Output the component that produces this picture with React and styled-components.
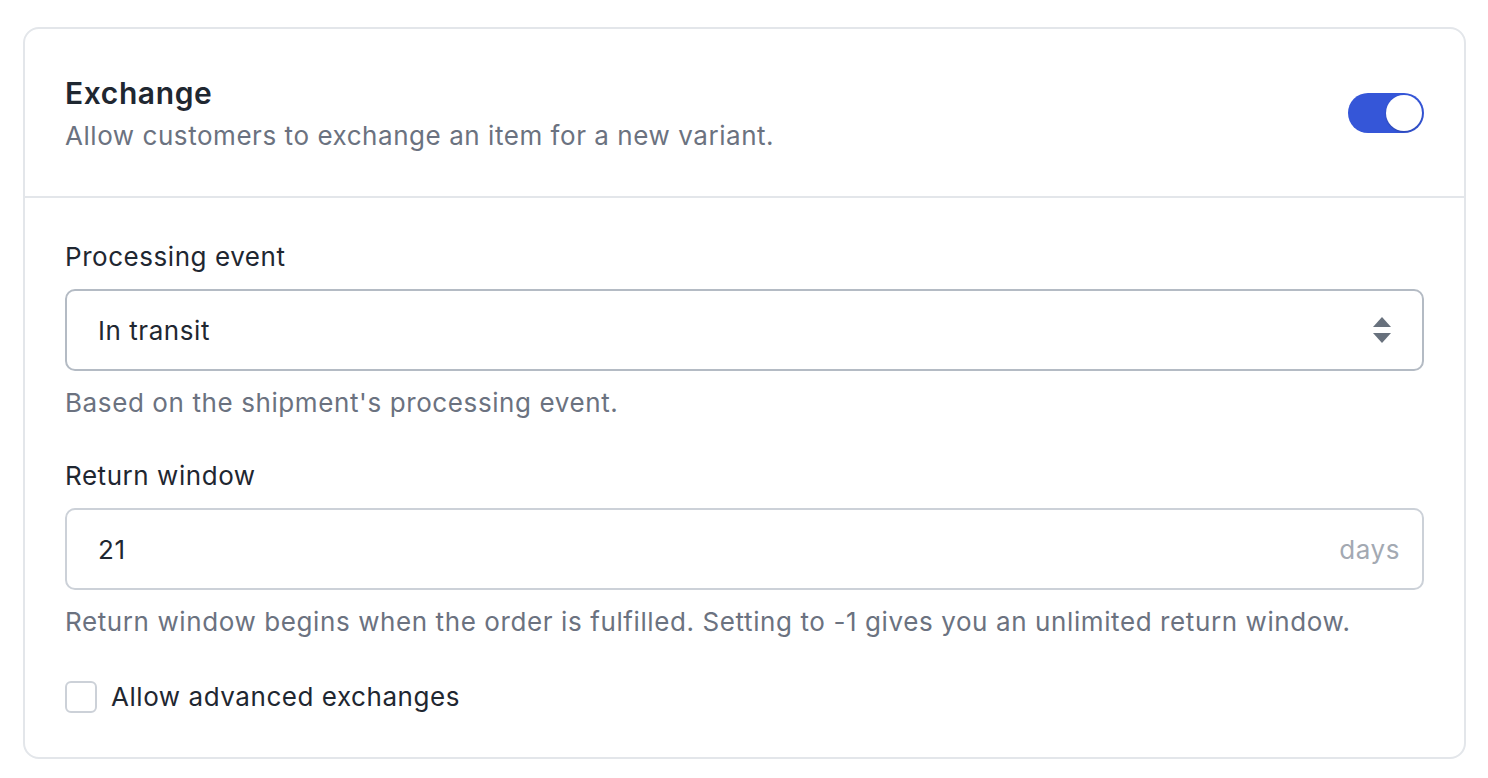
import React, { useState } from 'react'
import styled, { createGlobalStyle } from 'styled-components'

const GlobalStyle = createGlobalStyle`
  body {
    margin: 0;
    background: #fff;
    font-family: Inter, "Noto Sans", sans-serif;
    -webkit-font-smoothing: antialiased;
  }
`;

const Page = styled.div`
  padding: 27px 22px 27px 23px;
`;

const Card = styled.section`
  border: 2px solid #e3e6ea;
  border-radius: 16px;
  background: #fff;
`;

const Header = styled.div`
  display: flex;
  align-items: center;
  justify-content: space-between;
  padding: 44px 40px 42px;
  border-bottom: 2px solid #e3e6ea;
`;

const Title = styled.h2`
  margin: 0;
  font-size: 30px;
  line-height: 40px;
  font-weight: 600;
  letter-spacing: 0.6px;
  color: #1f2731;
`;

const Subtitle = styled.p`
  margin: 5px 0 0;
  font-size: 26px;
  line-height: 36px;
  letter-spacing: 0.55px;
  color: #6b7280;
`;

const Toggle = styled.button`
  position: relative;
  width: 76px;
  height: 40px;
  border: none;
  border-radius: 20px;
  padding: 0;
  margin-bottom: 2px;
  background: ${p => (p.$on ? '#3556d8' : '#d1d5db')};
  cursor: pointer;
  flex-shrink: 0;

  &::after {
    content: '';
    position: absolute;
    top: 2px;
    left: ${p => (p.$on ? '38px' : '2px')};
    width: 36px;
    height: 36px;
    border-radius: 50%;
    background: #fff;
    box-shadow: 0 1px 2px rgba(0, 0, 0, 0.2);
    transition: left 0.15s ease;
  }
`;

const Body = styled.div`
  display: flex;
  flex-direction: column;
  gap: 37px;
  padding: 41px 40px 42px;
`;

const Field = styled.div`
  display: flex;
  flex-direction: column;
`;

const Label = styled.label`
  font-size: 26px;
  line-height: 36px;
  letter-spacing: 0.55px;
  color: #1f2731;
  margin-bottom: 14px;
`;

const Hint = styled.p`
  margin: 14px 0 0;
  font-size: 26px;
  line-height: 36px;
  letter-spacing: 0.6px;
  color: #6b7280;
`;

const Control = styled.div`
  display: flex;
  align-items: center;
  justify-content: space-between;
  height: 82px;
  box-sizing: border-box;
  padding: 0 22px 0 31px;
  border: 2px solid ${p => (p.$strong ? '#b4bbc4' : '#ccd1d8')};
  border-radius: 10px;
  font-size: 26px;
  letter-spacing: 0.55px;
  color: #1f2731;
`;

const Suffix = styled.span`
  color: #a3a9b2;
  font-size: 26px;
`;

const ArrowWrap = styled.span`
  display: flex;
  margin-right: 8px;
`;

const CheckRow = styled.label`
  display: flex;
  align-items: center;
  gap: 14px;
  margin-top: 2px;
  font-size: 26px;
  line-height: 36px;
  letter-spacing: 0.55px;
  color: #1f2731;
`;

const Box = styled.span`
  width: 32px;
  height: 32px;
  box-sizing: border-box;
  border: 2px solid #ccd1d8;
  border-radius: 6px;
  background: #fff;
`;

const Arrows = () => (
  <ArrowWrap>
    <svg width="20" height="30" viewBox="0 0 20 30">
      <path d="M10 2 L19 12 L1 12 Z" fill="#68717d" />
      <path d="M1 18 L19 18 L10 28 Z" fill="#68717d" />
    </svg>
  </ArrowWrap>
);

export default function App() {
  const [on, setOn] = useState(true)
  return (
    <Page>
      <GlobalStyle />
      <Card>
        <Header>
          <div>
            <Title>Exchange</Title>
            <Subtitle>Allow customers to exchange an item for a new variant.</Subtitle>
          </div>
          <Toggle $on={on} onClick={() => setOn(!on)} aria-label="Toggle exchange" />
        </Header>
        <Body>
          <Field>
            <Label>Processing event</Label>
            <Control $strong>
              <span>In transit</span>
              <Arrows />
            </Control>
            <Hint>Based on the shipment's processing event.</Hint>
          </Field>
          <Field>
            <Label>Return window</Label>
            <Control>
              <span>21</span>
              <Suffix>days</Suffix>
            </Control>
            <Hint>Return window begins when the order is fulfilled. Setting to -1 gives you an unlimited return window.</Hint>
          </Field>
          <CheckRow>
            <Box />
            Allow advanced exchanges
          </CheckRow>
        </Body>
      </Card>
    </Page>
  )
}
